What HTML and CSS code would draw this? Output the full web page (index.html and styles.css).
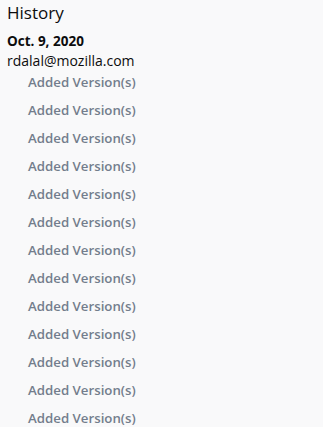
FILE: index.html
```html
<!DOCTYPE html>
<html>
<head>
<meta charset="utf-8">
<link rel="stylesheet" href="styles.css">
</head>
<body>
<div class="history">
  <h2 class="title">History</h2>
  <div class="date">Oct. 9, 2020</div>
  <div class="user">rdalal@mozilla.com</div>
  <ul class="changes">
    <li>Added Version(s)</li>
    <li>Added Version(s)</li>
    <li>Added Version(s)</li>
    <li>Added Version(s)</li>
    <li>Added Version(s)</li>
    <li>Added Version(s)</li>
    <li>Added Version(s)</li>
    <li>Added Version(s)</li>
    <li>Added Version(s)</li>
    <li>Added Version(s)</li>
    <li>Added Version(s)</li>
    <li>Added Version(s)</li>
    <li>Added Version(s)</li>
  </ul>
</div>
</body>
</html>
```
FILE: styles.css
```css
html, body {
  margin: 0;
  padding: 0;
  background: #f9f9fa;
  font-family: "Open Sans", "Noto Sans", sans-serif;
  color: #0c0c0d;
}
.history {
  padding: 2px 7px 0;
  display: flex;
  flex-direction: column;
}
.title {
  margin: 0;
  font-size: 17px;
  font-weight: 400;
  line-height: 22px;
}
.date {
  margin-top: 8px;
  font-size: 13.5px;
  font-weight: 700;
  line-height: 18px;
}
.user {
  margin-top: 1px;
  font-size: 14px;
  line-height: 20px;
}
.changes {
  list-style: none;
  margin: 2px 0 0;
  padding: 0 0 0 21px;
  display: flex;
  flex-direction: column;
  gap: 10px;
}
.changes li {
  font-size: 13.25px;
  font-weight: 600;
  color: #737d8c;
  line-height: 18px;
}
```
